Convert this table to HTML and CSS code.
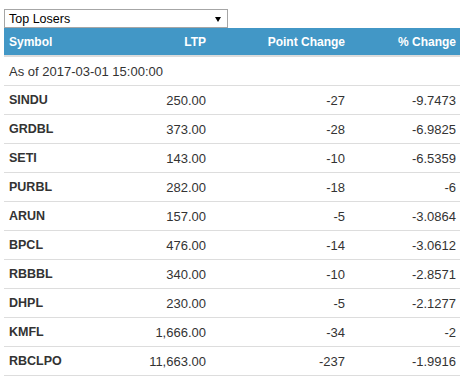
FILE: index.html
```html
<!DOCTYPE html>
<html>
<head>
<meta charset="utf-8">
<link rel="stylesheet" href="styles.css">
</head>
<body>
<div class="wrap">
  <div class="select">
    <span class="select-text">Top Losers</span>
    <svg class="arrow" width="6" height="5" viewBox="0 0 6 5"><polygon points="0,0 6,0 3,5" fill="#000"/></svg>
  </div>
  <table class="grid">
    <colgroup>
      <col class="c1"><col class="c2"><col class="c3"><col class="c4">
    </colgroup>
    <thead>
      <tr><th class="l">Symbol</th><th>LTP</th><th>Point Change</th><th>% Change</th></tr>
    </thead>
    <tbody>
      <tr><td class="date" colspan="4">As of 2017-03-01 15:00:00</td></tr>
      <tr><td class="sym">SINDU</td><td>250.00</td><td>-27</td><td>-9.7473</td></tr>
      <tr><td class="sym">GRDBL</td><td>373.00</td><td>-28</td><td>-6.9825</td></tr>
      <tr><td class="sym">SETI</td><td>143.00</td><td>-10</td><td>-6.5359</td></tr>
      <tr><td class="sym">PURBL</td><td>282.00</td><td>-18</td><td>-6</td></tr>
      <tr><td class="sym">ARUN</td><td>157.00</td><td>-5</td><td>-3.0864</td></tr>
      <tr><td class="sym">BPCL</td><td>476.00</td><td>-14</td><td>-3.0612</td></tr>
      <tr><td class="sym">RBBBL</td><td>340.00</td><td>-10</td><td>-2.8571</td></tr>
      <tr><td class="sym">DHPL</td><td>230.00</td><td>-5</td><td>-2.1277</td></tr>
      <tr><td class="sym">KMFL</td><td>1,666.00</td><td>-34</td><td>-2</td></tr>
      <tr><td class="sym">RBCLPO</td><td>11,663.00</td><td>-237</td><td>-1.9916</td></tr>
    </tbody>
  </table>
</div>
</body>
</html>
```
FILE: styles.css
```css
html, body {
  margin: 0;
  padding: 0;
  background: #fff;
}
body {
  font-family: "Liberation Sans", Arial, sans-serif;
  font-size: 13px;
  color: #333;
}
.wrap {
  padding: 9px 0 0 4px;
}
.select {
  box-sizing: border-box;
  width: 224px;
  height: 19px;
  border: 1px solid #a6a6a6;
  display: flex;
  align-items: center;
  justify-content: space-between;
  padding: 0 6px 0 4px;
  color: #000;
  font-size: 12.5px;
  background: #fff;
}
.arrow {
  display: block;
  margin-top: 1px;
}
.grid {
  border-collapse: collapse;
  table-layout: fixed;
  width: 456px;
}
.c1 { width: 103px; }
.c2 { width: 103px; }
.c3 { width: 139px; }
.c4 { width: 111px; }
.grid th {
  background: #4297c6;
  color: #fff;
  font-size: 12px;
  font-weight: bold;
  height: 28px;
  padding: 0 4px 0 5px;
  text-align: right;
  border-bottom: 2px solid #dcdcdc;
  box-sizing: border-box;
}
.grid th.l {
  text-align: left;
}
.grid td {
  height: 28px;
  padding: 0 4px 0 5px;
  text-align: right;
  border-bottom: 1px solid #ddd;
  white-space: nowrap;
}
.grid td.sym {
  text-align: left;
  font-weight: bold;
  font-size: 12.5px;
}
.grid td.date {
  text-align: left;
}
```
